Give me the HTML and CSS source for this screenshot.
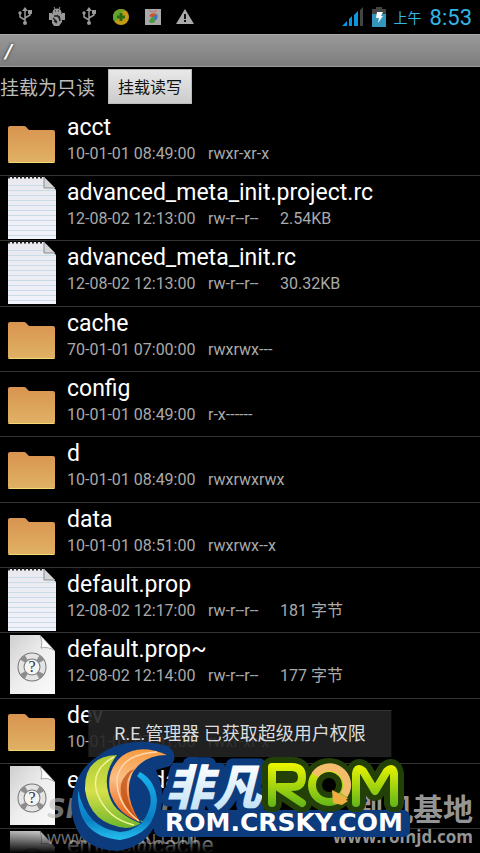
FILE: index.html
```html
<!DOCTYPE html>
<html lang="zh-CN">
<head>
    <meta charset="UTF-8">
    <meta name="viewport" content="width=device-width, initial-scale=1.0">
    <title>R.E.管理器</title>
    <link rel="stylesheet" href="styles.css">
</head>
<body>
    <!-- 公用图标 -->
    <svg class="defs" width="0" height="0" aria-hidden="true">
        <defs>
            <linearGradient id="g-folder" x1="0" y1="0" x2="0" y2="1">
                <stop offset="0" stop-color="#d89450"/>
                <stop offset="1" stop-color="#e0b265"/>
            </linearGradient>
            <linearGradient id="g-paper" x1="0" y1="0" x2="0" y2="1">
                <stop offset="0" stop-color="#e9e9ef"/>
                <stop offset="1" stop-color="#f1f2fa"/>
            </linearGradient>
            <linearGradient id="g-unknown" x1="0" y1="0" x2="1" y2="1">
                <stop offset="0" stop-color="#cfcfcf"/>
                <stop offset="0.5" stop-color="#eeeeee"/>
                <stop offset="1" stop-color="#fafafa"/>
            </linearGradient>
            <symbol id="folder" viewBox="0 0 56 64">
                <path d="M8 17q0-2 2-2h14q2 0 3 2l2 2h24q2 0 2 2v29q0 2-2 2H10q-2 0-2-2z" fill="url(#g-folder)"/>
                <path d="M8.500 51.500h46" stroke="#f5d872"/>
            </symbol>
            <symbol id="text" viewBox="0 0 56 64">
                <path d="M8 1h36l12 13v49H8z" fill="url(#g-paper)"/>
                <path d="M8 1.500h37" stroke="#222" stroke-width="2" stroke-dasharray="2 2"/>
                <path d="M8 9.500h36M8 14.500h48M8 19.500h48M8 24.500h48M8 29.500h48M8 34.500h48M8 39.500h48M8 44.500h48M8 49.500h48M8 54.500h48M8 59.500h48" stroke="#c9dbe6"/>
                <path d="M44 1v11h11z" fill="#d6d6d8" stroke="#8b8b90"/>
            </symbol>
            <symbol id="unknown" viewBox="0 0 56 64">
                <path d="M10 2h30l15 16v43H10z" fill="url(#g-unknown)"/>
                <path d="M40 2q3 8 1 13 7-2 14 3z" fill="#fff" stroke="#777" stroke-width=".6"/>
                <circle cx="32" cy="34" r="11" fill="#f4f4f4" stroke="#777" stroke-width="7"/>
                <circle cx="32" cy="34" r="11" fill="none" stroke="#e4e4e4" stroke-width="5"/>
                <circle cx="32" cy="34" r="11" fill="none" stroke="#8d8d8d" stroke-width="6" stroke-dasharray="5 12.280" stroke-dashoffset="-6"/>
                <text x="32" y="39" class="mark">?</text>
            </symbol>
            <symbol id="usb" viewBox="0 0 18 20">
                <path d="M9 3v13M9 13l-5-3V6M9 11l5-3V5" fill="none" stroke="#999" stroke-width="1.500"/>
                <path d="M9 0l3 4H6z" fill="#999"/>
                <circle cx="9" cy="16" r="2" fill="#999"/>
                <circle cx="4" cy="6" r="1.700" fill="#999"/>
                <path d="M12 3h4v4h-4z" fill="#999"/>
            </symbol>
        </defs>
    </svg>

    <div class="screen">
        <header class="status">
            <div class="notices">
                <svg width="18" height="20"><use href="#usb"/></svg>
                <svg width="18" height="20" viewBox="0 0 18 20">
                    <path d="M5 5q0-3 4-3t4 3v2H5zM6 0l1 2M12 0l-1 2" fill="#999" stroke="#999"/>
                    <path d="M4 7h10v8l-3 4H6l-2-3zM1 6h3v7H1zM14 6h3v7h-3z" fill="#999"/>
                    <path d="M6 9h3M5 11l4 4M9 8l3 4M6 14l3 2M11 9l1 5" stroke="#222" stroke-width="1.500"/>
                    <path d="M7 4h1M10 4h1" stroke="#111"/>
                </svg>
                <svg width="18" height="20"><use href="#usb"/></svg>
                <svg width="18" height="20" viewBox="0 0 18 20">
                    <circle cx="9" cy="10" r="8" fill="#c79a16"/>
                    <path d="M1 10a8 8 0 0 1 13-6q-6 0-7 5t-5 5q-1-2-1-4z" fill="#5fa52f"/>
                    <path d="M9 6v8M5 10h8" stroke="#2b6813" stroke-width="3"/>
                </svg>
                <svg width="18" height="20" viewBox="0 0 18 20">
                    <path d="M1 2h16v16H1z" fill="#a9a9a9"/>
                    <path d="M5 3q4 4 8 0" fill="none" stroke="#c66"/>
                    <path d="M5 9q2-4 8-2l-4 4z" fill="#d0522b"/>
                    <path d="M13 7q2 4-2 7l-2-4z" fill="#3977c2"/>
                    <path d="M5 15q1-5 5-5l1 5q-3 2-6 0z" fill="#499c3b"/>
                </svg>
                <svg width="18" height="20" viewBox="0 0 18 20">
                    <path d="M9 2l9 15H0z" fill="#aaa"/>
                    <path d="M9 7v5M9 13v2" stroke="#111" stroke-width="2"/>
                </svg>
            </div>
            <div class="system">
                <svg width="22" height="20" viewBox="0 0 22 20">
                    <path d="M0 19l5-5v5zM7 12l3-3v10H7zM12 8l4-4v15h-4z" fill="#0a95e0"/>
                    <path d="M18 3l3-3v19h-3z" fill="#444"/>
                </svg>
                <svg width="14" height="20" viewBox="0 0 14 20">
                    <path d="M4 0h6v2h4v5H0V2h4z" fill="#444"/>
                    <path d="M0 7h14v13H0z" fill="#3596bd"/>
                    <path d="M5 5h6l-2 4h2l-5 7 1-5H4z" fill="#fff"/>
                </svg>
                <span class="ampm">上午</span>
                <time class="clock">8:53</time>
            </div>
        </header>

        <h1 class="path">/</h1>

        <div class="mount">
            <span>挂载为只读</span>
            <button type="button">挂载读写</button>
        </div>

        <ul class="files">
            <li>
                <svg class="icon"><use href="#folder"/></svg>
                <div class="info"><h2>acct</h2><p><span>10-01-01 08:49:00</span><span>rwxr-xr-x</span></p></div>
            </li>
            <li>
                <svg class="icon"><use href="#text"/></svg>
                <div class="info"><h2>advanced_meta_init.project.rc</h2><p><span>12-08-02 12:13:00</span><span>rw-r--r--</span><span>2.54KB</span></p></div>
            </li>
            <li>
                <svg class="icon"><use href="#text"/></svg>
                <div class="info"><h2>advanced_meta_init.rc</h2><p><span>12-08-02 12:13:00</span><span>rw-r--r--</span><span>30.32KB</span></p></div>
            </li>
            <li>
                <svg class="icon"><use href="#folder"/></svg>
                <div class="info"><h2>cache</h2><p><span>70-01-01 07:00:00</span><span>rwxrwx---</span></p></div>
            </li>
            <li>
                <svg class="icon"><use href="#folder"/></svg>
                <div class="info"><h2>config</h2><p><span>10-01-01 08:49:00</span><span>r-x------</span></p></div>
            </li>
            <li>
                <svg class="icon"><use href="#folder"/></svg>
                <div class="info"><h2>d</h2><p><span>10-01-01 08:49:00</span><span>rwxrwxrwx</span></p></div>
            </li>
            <li>
                <svg class="icon"><use href="#folder"/></svg>
                <div class="info"><h2>data</h2><p><span>10-01-01 08:51:00</span><span>rwxrwx--x</span></p></div>
            </li>
            <li>
                <svg class="icon"><use href="#text"/></svg>
                <div class="info"><h2>default.prop</h2><p><span>12-08-02 12:17:00</span><span>rw-r--r--</span><span>181 字节</span></p></div>
            </li>
            <li>
                <svg class="icon"><use href="#unknown"/></svg>
                <div class="info"><h2>default.prop~</h2><p><span>12-08-02 12:14:00</span><span>rw-r--r--</span><span>177 字节</span></p></div>
            </li>
            <li>
                <svg class="icon"><use href="#folder"/></svg>
                <div class="info"><h2>dev</h2><p><span>10-01-01 07:01:00</span><span>rwxr-xr-x</span></p></div>
            </li>
            <li>
                <svg class="icon"><use href="#unknown"/></svg>
                <div class="info"><h2>emmc@data</h2></div>
            </li>
            <li>
                <svg class="icon"><use href="#unknown"/></svg>
                <div class="info"><h2>emmc@cache</h2></div>
            </li>
        </ul>

        <div class="fade"></div>
        <div class="toast" role="status">R.E.管理器 已获取超级用户权限</div>

        <div class="site site-left"><b>SHENDU</b><span>www.shendu.com</span></div>
        <div class="site site-right"><b>刷机基地</b><span>www.romjd.com</span></div>

        <svg class="brand" viewBox="0 0 344 115" role="img" aria-label="非凡ROM ROM.CRSKY.COM">
            <defs>
                <linearGradient id="g-rom" gradientUnits="userSpaceOnUse" x1="0" y1="25" x2="0" y2="69">
                    <stop offset="0" stop-color="#eef700"/>
                    <stop offset="1" stop-color="#60b51a"/>
                </linearGradient>
                <linearGradient id="g-leaf" x1="0" y1="0" x2="0" y2="1">
                    <stop offset="0" stop-color="#aecb35"/>
                    <stop offset="0.500" stop-color="#d5e04a"/>
                    <stop offset="1" stop-color="#6db52c"/>
                </linearGradient>
                <linearGradient id="g-orange" x1="0" y1="0" x2="0" y2="1">
                    <stop offset="0" stop-color="#f79a3e"/>
                    <stop offset="0.400" stop-color="#fbbd84"/>
                    <stop offset="1" stop-color="#e9580b"/>
                </linearGradient>
                <linearGradient id="g-ring" x1="0" y1="0" x2="0" y2="1">
                    <stop offset="0" stop-color="#18b4ef"/>
                    <stop offset="0.700" stop-color="#0b7fc4"/>
                    <stop offset="1" stop-color="#25c0ee"/>
                </linearGradient>
                <linearGradient id="g-white" x1="0" y1="0" x2="0" y2="1">
                    <stop offset="0.200" stop-color="#ffffff"/>
                    <stop offset="1" stop-color="#b5dcf5"/>
                </linearGradient>
            </defs>
            <!-- 球形标志 -->
            <path d="M4 60Q8 32 30 18Q50 2 80 4l20 4q12 10 2 20l-14 4Q97 50 93 72Q84 108 50 113Q14 112 6 84Q2 72 4 60z" fill="#0c3c7d"/>
            <path d="M10 52Q8 98 52 102Q88 96 89 62Q87 42 72 34l-3 4Q86 52 82 68Q76 92 52 94Q18 90 10 52z" fill="url(#g-ring)"/>
            <path d="M49 17Q16 18 17 52Q22 86 58 90Q68 90 75 83Q47 78 41 57Q34 36 49 17z" fill="url(#g-leaf)"/>
            <path d="M46 19Q22 32 29 55Q39 81 66 87" fill="none" stroke="#f1f394" stroke-width="1.500"/>
            <path d="M99 17Q72 5 54 18Q38 32 42 54Q49 76 72 84Q54 56 65 34Q76 17 99 17z" fill="url(#g-orange)" stroke="#0c3c7d" stroke-width="2" paint-order="stroke"/>
            <path d="M68 30Q57 38 59 56Q62 73 72 84Q50 66 53 46Q57 34 68 30z" fill="#b9480c" opacity=".7"/>
            <path d="M89 14Q54 16 49 40Q48 66 71 83" fill="none" stroke="#ffd7ac" stroke-width="1.500"/>
            <!-- 文字 -->
            <rect x="86" y="72" width="256" height="27" rx="7" fill="#0c3c7d"/>
            <text x="97" y="67" class="brand-cn">非凡</text>
            <g fill="none" stroke-linecap="round" stroke-linejoin="round">
                <g stroke="#224008" stroke-width="20">
                    <path d="M204 65V29h20q10 0 10 10t-10 10h-14l24 16"/>
                    <circle cx="261" cy="47" r="17"/>
                    <path d="M288 65V36q1-8 7-3l12 20 12-20q6-5 7 3v29"/>
                </g>
                <g stroke="url(#g-rom)" stroke-width="8">
                    <path d="M204 65V29h20q10 0 10 10t-10 10h-14l24 16"/>
                    <circle cx="261" cy="47" r="17"/>
                    <path d="M288 65V36q1-8 7-3l12 20 12-20q6-5 7 3v29"/>
                </g>
            </g>
            <path d="M247 37a17 17 0 0 1 29 20" fill="none" stroke="#f3bd6b" stroke-width="8"/>
            <path d="M264 52l16 8-2 2 2 1-6 4-9-2z" fill="#efae42"/>
            <rect x="170" y="74" width="172" height="25" rx="7" fill="#0c3c7d"/>
            <text x="97" y="93" class="brand-url">ROM.CRSKY.COM</text>
        </svg>
    </div>
</body>
</html>
```
FILE: styles.css
```css
* {
    margin: 0;
    padding: 0;
    box-sizing: border-box;
}
body {
    background: #000;
    color: #fff;
    font-family: Roboto, "Noto Sans CJK SC", sans-serif;
}
.defs {
    position: absolute;
}
.screen {
    position: relative;
    height: 100vh;
    overflow: hidden;
}
.status {
    display: flex;
    justify-content: space-between;
    height: 34px;
    padding: 0 8px 0 16px;
}
.notices {
    display: flex;
    align-items: center;
    gap: 14px;
}
.notices svg {
    overflow: visible;
}
.system {
    display: flex;
    align-items: center;
    gap: 8px;
    color: #33b5e5;
}
.ampm {
    font-size: 14px;
}
.clock {
    font-size: 22px;
}
.path {
    height: 33px;
    padding-left: 5px;
    border-top: 1px solid #aaa;
    border-bottom: 1px solid #999;
    background: linear-gradient(#999, #7d7d7d);
    font-size: 20px;
    font-style: italic;
    line-height: 32px;
    text-shadow: 0 0 3px #222;
}
.mount {
    display: flex;
    align-items: center;
    gap: 13px;
    height: 44px;
    padding-bottom: 6px;
    color: #bbb;
    font-size: 19px;
}
.mount button {
    height: 35px;
    padding: 0 9px;
    border: 1px solid #bbb;
    background: linear-gradient(#e8e8e8, #ccc);
    color: #111;
    font-family: inherit;
    font-size: 16px;
}
.files {
    list-style-type: none;
}
.files li {
    display: flex;
    gap: 11px;
    height: 65px;
    border-bottom: 1px solid #333;
}
.files li:nth-child(3n) {
    height: 66px;
}
.icon {
    flex: none;
    width: 56px;
    height: 64px;
}
.info {
    padding-top: 3px;
}
.info h2 {
    font-size: 23px;
    font-weight: 400;
    line-height: 28px;
}
.info p {
    display: flex;
    gap: 8px;
    color: #aaa;
    font-size: 16px;
    line-height: 24px;
}
.info p span:nth-child(1) {
    min-width: 133px;
}
.info p span:nth-child(2) {
    min-width: 64px;
}
.mark {
    font: 16px "Liberation Serif", serif;
    text-anchor: middle;
    fill: #333;
}
.fade {
    position: absolute;
    right: 0;
    bottom: 0;
    left: 0;
    height: 25px;
    background: linear-gradient(transparent, #000);
}
.toast {
    position: absolute;
    bottom: 96px;
    left: 50%;
    padding: 0 26px;
    border-top: 1px solid #333;
    background: rgba(35, 35, 35, .9);
    color: #ddd;
    font-size: 18px;
    line-height: 46px;
    white-space: nowrap;
    transform: translateX(-50%);
}
.site {
    position: absolute;
    bottom: 6px;
    display: flex;
    flex-direction: column;
    font-family: "Open Sans", "Noto Sans CJK SC", sans-serif;
}
.site b {
    font-size: 30px;
    line-height: 36px;
}
.site span {
    font-size: 18px;
    line-height: 20px;
}
.site-left {
    left: 47px;
    color: rgba(190, 190, 190, .6);
}
.site-left b {
    font-family: "DejaVu Sans", sans-serif;
    font-size: 26px;
    font-style: italic;
}
.site-right {
    right: 7px;
    align-items: flex-end;
    color: rgba(190, 190, 190, .8);
}
.site-right span {
    font-size: 17px;
    font-weight: 700;
}
.brand {
    position: absolute;
    bottom: 0;
    left: 68px;
    width: 344px;
    height: 115px;
}
.brand-cn {
    font: italic 900 48px "Noto Sans CJK SC", sans-serif;
    fill: url(#g-white);
    stroke: #0c3c7d;
    stroke-width: 14px;
    stroke-linejoin: round;
    paint-order: stroke;
}
.brand-url {
    font: 700 25px "DejaVu Sans", sans-serif;
    fill: #fff;
}
```
